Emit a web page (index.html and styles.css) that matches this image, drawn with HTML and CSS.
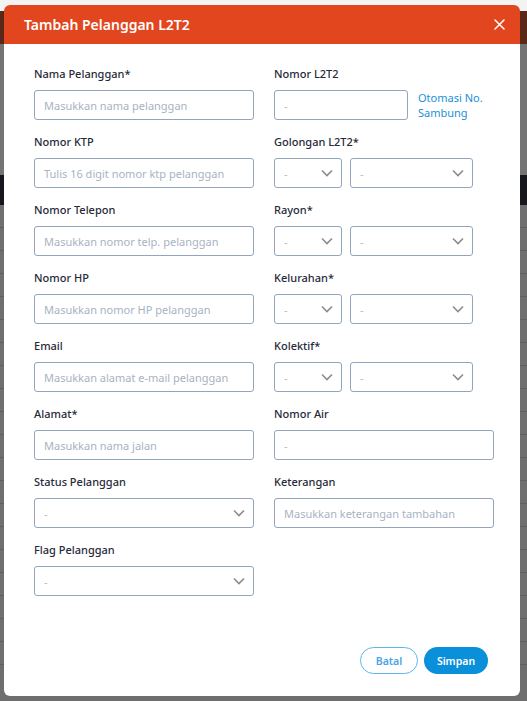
FILE: index.html
```html
<!DOCTYPE html>
<html lang="id">
<head>
<meta charset="utf-8">
<title>Tambah Pelanggan L2T2</title>
<link rel="stylesheet" href="styles.css">
</head>
<body>
<div class="page">
  <div class="topstrip"></div>
  <div class="navbar"></div>
  <div class="gap-area"></div>
  <div class="darkband"></div>
  <div class="rows">
    <div class="row"></div><div class="row"></div><div class="row"></div><div class="row"></div>
    <div class="row"></div><div class="row"></div><div class="row"></div><div class="row"></div>
    <div class="row"></div><div class="row"></div><div class="row"></div><div class="row"></div>
    <div class="row"></div><div class="row"></div><div class="row"></div><div class="row"></div>
    <div class="row"></div><div class="row"></div><div class="row"></div><div class="row"></div>
  </div>
</div>

<div class="modal">
  <div class="modal-header">
    <h1 class="modal-title">Tambah Pelanggan L2T2</h1>
    <button class="close-btn" aria-label="Tutup">
      <svg width="11" height="11" viewBox="0 0 11 11"><path d="M1 1 L10 10 M10 1 L1 10" stroke="#fff" stroke-width="1.5" stroke-linecap="round"/></svg>
    </button>
  </div>
  <div class="modal-body">
    <div class="col">
      <div class="field">
        <label class="label">Nama Pelanggan*</label>
        <div class="input"><span class="ph">Masukkan nama pelanggan</span></div>
      </div>
      <div class="field">
        <label class="label">Nomor KTP</label>
        <div class="input"><span class="ph">Tulis 16 digit nomor ktp pelanggan</span></div>
      </div>
      <div class="field">
        <label class="label">Nomor Telepon</label>
        <div class="input"><span class="ph">Masukkan nomor telp. pelanggan</span></div>
      </div>
      <div class="field">
        <label class="label">Nomor HP</label>
        <div class="input"><span class="ph">Masukkan nomor HP pelanggan</span></div>
      </div>
      <div class="field">
        <label class="label">Email</label>
        <div class="input"><span class="ph">Masukkan alamat e-mail pelanggan</span></div>
      </div>
      <div class="field">
        <label class="label">Alamat*</label>
        <div class="input"><span class="ph">Masukkan nama jalan</span></div>
      </div>
      <div class="field">
        <label class="label">Status Pelanggan</label>
        <div class="input select"><span class="dash">-</span><svg class="chev" width="12" height="8" viewBox="0 0 12 8"><path d="M1 1.5 L6 6.5 L11 1.5" fill="none" stroke="#8c8c8c" stroke-width="1.6"/></svg></div>
      </div>
      <div class="field">
        <label class="label">Flag Pelanggan</label>
        <div class="input select"><span class="dash">-</span><svg class="chev" width="12" height="8" viewBox="0 0 12 8"><path d="M1 1.5 L6 6.5 L11 1.5" fill="none" stroke="#8c8c8c" stroke-width="1.6"/></svg></div>
      </div>
    </div>
    <div class="col">
      <div class="field">
        <label class="label">Nomor L2T2</label>
        <div class="inline">
          <div class="input w134"><span class="dash">-</span></div>
          <a class="link">Otomasi No.<br>Sambung</a>
        </div>
      </div>
      <div class="field">
        <label class="label">Golongan L2T2*</label>
        <div class="inline sel-pair">
          <div class="input select small"><span class="dash">-</span><svg class="chev" width="12" height="8" viewBox="0 0 12 8"><path d="M1 1.5 L6 6.5 L11 1.5" fill="none" stroke="#8c8c8c" stroke-width="1.6"/></svg></div>
          <div class="input select large"><span class="dash">-</span><svg class="chev" width="12" height="8" viewBox="0 0 12 8"><path d="M1 1.5 L6 6.5 L11 1.5" fill="none" stroke="#8c8c8c" stroke-width="1.6"/></svg></div>
        </div>
      </div>
      <div class="field">
        <label class="label">Rayon*</label>
        <div class="inline sel-pair">
          <div class="input select small"><span class="dash">-</span><svg class="chev" width="12" height="8" viewBox="0 0 12 8"><path d="M1 1.5 L6 6.5 L11 1.5" fill="none" stroke="#8c8c8c" stroke-width="1.6"/></svg></div>
          <div class="input select large"><span class="dash">-</span><svg class="chev" width="12" height="8" viewBox="0 0 12 8"><path d="M1 1.5 L6 6.5 L11 1.5" fill="none" stroke="#8c8c8c" stroke-width="1.6"/></svg></div>
        </div>
      </div>
      <div class="field">
        <label class="label">Kelurahan*</label>
        <div class="inline sel-pair">
          <div class="input select small"><span class="dash">-</span><svg class="chev" width="12" height="8" viewBox="0 0 12 8"><path d="M1 1.5 L6 6.5 L11 1.5" fill="none" stroke="#8c8c8c" stroke-width="1.6"/></svg></div>
          <div class="input select large"><span class="dash">-</span><svg class="chev" width="12" height="8" viewBox="0 0 12 8"><path d="M1 1.5 L6 6.5 L11 1.5" fill="none" stroke="#8c8c8c" stroke-width="1.6"/></svg></div>
        </div>
      </div>
      <div class="field">
        <label class="label">Kolektif*</label>
        <div class="inline sel-pair">
          <div class="input select small"><span class="dash">-</span><svg class="chev" width="12" height="8" viewBox="0 0 12 8"><path d="M1 1.5 L6 6.5 L11 1.5" fill="none" stroke="#8c8c8c" stroke-width="1.6"/></svg></div>
          <div class="input select large"><span class="dash">-</span><svg class="chev" width="12" height="8" viewBox="0 0 12 8"><path d="M1 1.5 L6 6.5 L11 1.5" fill="none" stroke="#8c8c8c" stroke-width="1.6"/></svg></div>
        </div>
      </div>
      <div class="field">
        <label class="label">Nomor Air</label>
        <div class="input"><span class="dash">-</span></div>
      </div>
      <div class="field">
        <label class="label">Keterangan</label>
        <div class="input"><span class="ph">Masukkan keterangan tambahan</span></div>
      </div>
    </div>
  </div>
  <div class="modal-footer">
    <button class="btn btn-outline">Batal</button>
    <button class="btn btn-primary">Simpan</button>
  </div>
</div>
</body>
</html>
```
FILE: styles.css
```css
* { box-sizing: border-box; }
html, body { margin: 0; padding: 0; }
body {
  width: 527px;
  height: 701px;
  overflow: hidden;
  font-family: "Noto Sans", "Open Sans", sans-serif;
  background: #6e6e6e;
  position: relative;
}
.page { display: flex; flex-direction: column; }
.topstrip { height: 11px; background: #f3f3f3; }
.navbar { height: 33px; background: #5a2818; }
.gap-area { height: 131px; background: #747474; }
.darkband { height: 30px; background: #16171d; }
.rows { display: flex; flex-direction: column; }
.row { height: 23px; border-bottom: 1px solid #5f5f5f; background: #6f6f6f; }

.modal {
  position: absolute;
  left: 4px;
  top: 5px;
  width: 516px;
  height: 691px;
  background: #fff;
  border-radius: 6px;
  overflow: hidden;
  display: flex;
  flex-direction: column;
}
.modal-header {
  height: 39px;
  background: #e1461e;
  display: flex;
  align-items: center;
  justify-content: space-between;
  padding: 0 14px 0 20px;
}
.modal-title {
  margin: 0;
  color: #fff;
  font-size: 14px;
  font-weight: 600;
}
.close-btn {
  border: 0;
  background: none;
  padding: 0;
  width: 14px;
  height: 14px;
  display: flex;
  align-items: center;
  justify-content: center;
}
.modal-body {
  flex: 1;
  display: grid;
  grid-template-columns: 220px 220px;
  column-gap: 20px;
  padding: 21px 0 0 30px;
  align-content: start;
}
.col { display: flex; flex-direction: column; }
.field { display: flex; flex-direction: column; margin-bottom: 13px; }
.label {
  height: 18px;
  line-height: 18px;
  font-size: 11px;
  font-weight: 500;
  color: #272a3a;
  margin-bottom: 7px;
}
.input {
  height: 30px;
  border: 1px solid #93a4bd;
  border-radius: 3px;
  display: flex;
  align-items: center;
  padding: 0 9px;
  font-size: 11px;
  position: relative;
}
.ph { color: #a7b3c4; white-space: nowrap; }
.dash { color: #b3bfcc; }
.select { justify-content: space-between; padding-right: 8px; }
.chev { display: block; }
.inline { display: flex; align-items: center; }
.w134 { width: 134px; }
.link {
  margin-left: 10px;
  color: #1b8fd8;
  font-size: 11px;
  line-height: 15px;
}
.sel-pair { gap: 8px; }
.small { width: 68px; }
.large { width: 123px; }

.modal-footer {
  display: flex;
  justify-content: flex-end;
  gap: 6px;
  padding: 0 32px 22px 0;
}
.btn {
  height: 27px;
  border-radius: 14px;
  font-family: inherit;
  font-size: 10.5px;
  font-weight: 600;
  cursor: pointer;
}
.btn-outline {
  width: 58px;
  background: #fff;
  border: 1px solid #5db5ee;
  color: #45a6e6;
}
.btn-primary {
  width: 64px;
  background: #0a8fdb;
  border: 0;
  color: #fff;
}
```
